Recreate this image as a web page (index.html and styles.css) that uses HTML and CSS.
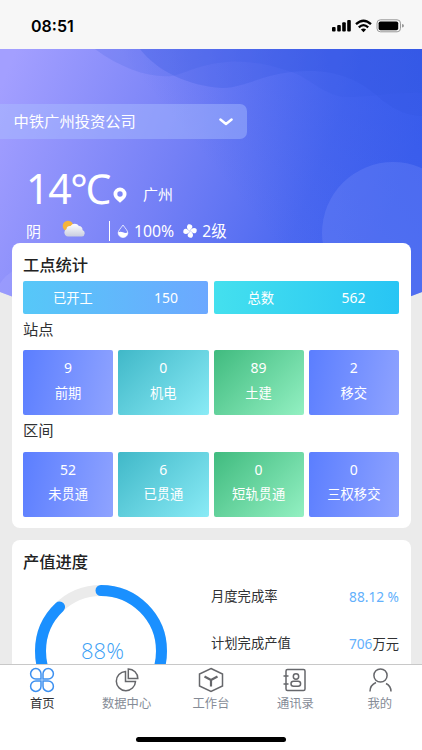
FILE: index.html
```html
<!DOCTYPE html>
<html lang="zh-CN">
<head>
  <meta charset="UTF-8">
  <meta name="viewport" content="width=device-width, initial-scale=1.0">
  <title>首页</title>
  <link rel="stylesheet" href="styles.css">
</head>
<body>

<!-- 状态栏 -->
<header class="status-bar">
  <span class="time">08:51</span>
  <svg class="status-icons" width="74" height="14" viewBox="0 0 74 14">
    <rect x="1" y="8" width="3.600" height="4.500" rx="1"/>
    <rect x="6.200" y="6" width="3.600" height="6.500" rx="1"/>
    <rect x="11.200" y="3.300" width="3.600" height="9.200" rx="1"/>
    <rect x="16.200" y="1" width="3.600" height="11.500" rx="1"/>
    <g fill="none" stroke="#000" stroke-width="2.3">
      <path d="M25 5.2Q32.5-1.8 40 5.2"/>
      <path d="M27.8 8.3Q32.5 4 37.2 8.3"/>
    </g>
    <path d="M29.9 10.5Q32.5 8.3 35.1 10.5L32.5 13.2z"/>
    <rect x="46" y=".8" width="23.5" height="12" rx="3.4" fill="none" stroke="#999"/>
    <rect x="47.6" y="2.5" width="19.6" height="8.7" rx="1.8"/>
    <path d="M71 5q2 .3 2 1.8T71 8.6z" fill="#999"/>
  </svg>
</header>

<main class="content">
  <!-- 顶部背景 -->
  <svg class="hero-bg" width="422" height="290" viewBox="0 0 422 290">
    <defs>
      <linearGradient id="sky" gradientUnits="userSpaceOnUse" x1="0" y1="40" x2="380" y2="190">
        <stop offset="0" stop-color="#a39fff"/>
        <stop offset=".46" stop-color="#7480f6"/>
        <stop offset=".8" stop-color="#4c69f0"/>
        <stop offset="1" stop-color="#4263ef"/>
      </linearGradient>
      <linearGradient id="shade" gradientUnits="userSpaceOnUse" x1="240" y1="150" x2="422" y2="0">
        <stop offset="0" stop-color="#2f55e8" stop-opacity="0"/>
        <stop offset="1" stop-color="#2f55e8" stop-opacity=".6"/>
      </linearGradient>
      <clipPath id="arc"><path d="M0 0H422V243Q211 327 0 243z"/></clipPath>
    </defs>
    <g clip-path="url(#arc)">
      <rect width="422" height="290" fill="url(#sky)"/>
      <rect width="422" height="290" fill="url(#shade)"/>
      <path d="M95 0C122 20 150 29 172 27C190 23 200 14 235 12.500C260 13 278 18 297 25C317 35 328 49 352 48C375 47 395 43 422 44V0z" fill="#3456df" fill-opacity=".16"/>
      <path d="M140 0C157 22 188 37 223 39C250 38 264 22 310 22C340 22 362 32 382 51C398 63 408 66 422 67V0z" fill="#3456df" fill-opacity=".26"/>
      <circle cx="393" cy="184" r="71" fill="#8ba0ff" fill-opacity=".22"/>
      <circle cx="36" cy="258" r="43" fill="#aaa9ff" fill-opacity=".35"/>
    </g>
  </svg>

  <section class="hero">
    <div class="company">
      <span>中铁广州投资公司</span>
      <svg width="14" height="8" viewBox="0 0 14 8"><path d="M1.400 1.500L7 6L12.600 1.500" fill="none" stroke="#fff" stroke-width="2.400" stroke-linecap="round" stroke-linejoin="round"/></svg>
    </div>

    <div class="temp-row">
      <span class="temp">14℃</span>
      <svg class="pin" width="14" height="16" viewBox="0 0 14 16"><path fill="#fff" fill-rule="evenodd" d="M7 .5A6.500 6.500 0 0 0 .5 7C.5 10.500 4 13.300 7 15.700C10 13.300 13.500 10.500 13.500 7A6.500 6.500 0 0 0 7 .5zM7 4.300A2.700 2.700 0 1 1 7 9.700A2.700 2.700 0 0 1 7 4.300z"/></svg>
      <span class="city">广州</span>
    </div>

    <div class="weather-row">
      <span class="sky">阴</span>
      <svg class="cloud" width="24" height="18" viewBox="0 0 24 18">
        <defs>
          <linearGradient id="cloudFill" x1="0" y1="0" x2="0" y2="1">
            <stop offset="0" stop-color="#fff"/>
            <stop offset="1" stop-color="#c9cde0"/>
          </linearGradient>
        </defs>
        <circle cx="6" cy="6" r="5.300" fill="#f5b43c"/>
        <path d="M6 16.500A4 4 0 0 1 4.500 9A3.300 3.300 0 0 1 8.500 6A5.200 5.200 0 0 1 17 6A3.600 3.600 0 0 1 20.500 10A3.400 3.400 0 0 1 20 16.500z" fill="url(#cloudFill)"/>
      </svg>
      <i class="divider"></i>
      <svg class="drop" width="12" height="14" viewBox="0 0 12 14">
        <path d="M6 1C4 4 1.200 6.500 1.200 9A4.800 4.500 0 0 0 10.800 9C10.800 6.500 8 4 6 1z" fill="none" stroke="#dfe3ff"/>
        <path d="M1.200 8.300Q3.500 7 6 8.300T10.800 8.300A4.800 4.700 0 0 1 1.200 9z" fill="#fff"/>
      </svg>
      <span class="humidity">100%</span>
      <svg class="fan" width="14" height="14" viewBox="0 0 14 14" fill="#fff">
        <path id="blade" d="M7 7C4 5.500 3 2.500 5 .5C7.500 -.2 9.800 1 9.300 3.300C8.900 4.800 7.500 5 7 7z"/>
        <use href="#blade" transform="rotate(90 7 7)"/>
        <use href="#blade" transform="rotate(180 7 7)"/>
        <use href="#blade" transform="rotate(270 7 7)"/>
      </svg>
      <span class="wind">2级</span>
    </div>
  </section>

  <!-- 工点统计 -->
  <section class="card stats">
    <h2>工点统计</h2>
    <div class="totals">
      <div class="total started"><span>已开工</span><b>150</b></div>
      <div class="total all"><span>总数</span><b>562</b></div>
    </div>
    <h3>站点</h3>
    <div class="tiles">
      <div class="tile blue"><b>9</b><span>前期</span></div>
      <div class="tile teal"><b>0</b><span>机电</span></div>
      <div class="tile green"><b>89</b><span>土建</span></div>
      <div class="tile blue"><b>2</b><span>移交</span></div>
    </div>
    <h3>区间</h3>
    <div class="tiles">
      <div class="tile blue"><b>52</b><span>未贯通</span></div>
      <div class="tile teal"><b>6</b><span>已贯通</span></div>
      <div class="tile green"><b>0</b><span>短轨贯通</span></div>
      <div class="tile blue"><b>0</b><span>三权移交</span></div>
    </div>
  </section>

  <!-- 产值进度 -->
  <section class="card output">
    <h2>产值进度</h2>
    <div class="output-body">
      <svg class="ring" width="134" height="134" viewBox="0 0 134 134">
        <circle cx="67" cy="67" r="60.500" fill="none" stroke="#ebebeb" stroke-width="11"/>
        <circle cx="67" cy="67" r="60.500" fill="none" stroke="#1a90ff" stroke-width="11" stroke-linecap="round" pathLength="100" stroke-dasharray="88 100" transform="rotate(-90 67 67)"/>
        <text x="68.500" y="75" text-anchor="middle">88%</text>
      </svg>
      <div class="figures">
        <div class="figure"><span>月度完成率</span><span><em>88.12 %</em></span></div>
        <div class="figure"><span>计划完成产值</span><span><em>706</em>万元</span></div>
      </div>
    </div>
  </section>
</main>

<!-- 底部导航 -->
<footer class="bottom">
  <nav class="tabs">
    <a class="tab active">
      <svg width="26" height="26" viewBox="0 0 26 26">
        <path d="M12 12V6.800A5.200 5.200 0 1 0 6.800 12z"/>
        <path d="M14 12V6.800A5.200 5.200 0 1 1 19.200 12z"/>
        <path d="M12 14V19.200A5.200 5.200 0 1 1 6.800 14z"/>
        <path d="M14 14V19.200A5.200 5.200 0 1 0 19.200 14z"/>
      </svg>
      <span>首页</span>
    </a>
    <a class="tab">
      <svg width="26" height="26" viewBox="0 0 26 26">
        <path d="M11.500 4.500A9.600 9.600 0 1 0 21.500 14.500H11.500z"/>
        <path d="M14.300 2V11.500H23.800A9.500 9.500 0 0 0 14.300 2z"/>
      </svg>
      <span>数据中心</span>
    </a>
    <a class="tab">
      <svg width="26" height="26" viewBox="0 0 26 26">
        <path d="M13 1.500L24.500 7V19L13 24.500L1.500 19V7z"/>
        <path d="M6.500 9.500L13 13L19.500 9.500M13 13V19.500" stroke-width="2.200"/>
      </svg>
      <span>工作台</span>
    </a>
    <a class="tab">
      <svg width="26" height="26" viewBox="0 0 26 26">
        <rect x="4" y="2.500" width="19" height="21" rx="1.500"/>
        <path d="M1.500 9H6.500M1.500 17H6.500"/>
        <circle cx="14" cy="9.500" r="2.700"/>
        <rect x="9" y="14.300" width="9.600" height="5" rx="2.500"/>
      </svg>
      <span>通讯录</span>
    </a>
    <a class="tab">
      <svg width="26" height="26" viewBox="0 0 26 26">
        <circle cx="13.500" cy="8.500" r="6.600"/>
        <path d="M3 24.500C3 20 5.500 17 9 15.500M19 16.500C22 18 24 21 24 24.500"/>
      </svg>
      <span>我的</span>
    </a>
  </nav>
  <div class="home-line"></div>
</footer>

</body>
</html>
```
FILE: styles.css
```css
* {
  box-sizing: border-box;
}

body {
  margin: 0;
  height: 750px;
  display: flex;
  flex-direction: column;
  overflow: hidden;
  background-color: #ebebeb;
  color: #303133;
  font-family: "Noto Sans", "Noto Sans CJK SC", sans-serif;
}

svg {
  display: block;
  flex: none;
}

.status-bar {
  height: 49px;
  flex: none;
  display: flex;
  justify-content: space-between;
  padding: 19px 17px 0 31px;
  background-color: #f7f7f7;
}

.time {
  font: 600 16px/14px Inter, sans-serif;
  color: #000;
}

.content {
  position: relative;
  flex: 1;
  min-height: 0;
  overflow: hidden;
}

.hero-bg {
  position: absolute;
  top: 0;
  left: 0;
}

.hero {
  position: relative;
  height: 194px;
  padding-top: 55px;
  color: #fff;
}

.company {
  display: flex;
  align-items: center;
  justify-content: space-between;
  width: 246.5px;
  height: 35px;
  padding: 0 14px 0 13.5px;
  border-radius: 0 7px 7px 0;
  background-color: rgba(170, 190, 255, 0.45);
  font-size: 15.3px;
}

.company span {
  margin-top: -3px;
}

.temp-row {
  display: flex;
  height: 60px;
  margin-top: 19px;
  padding-left: 26px;
  line-height: 60px;
}

.temp {
  width: 87px;
  font-size: 41px;
  letter-spacing: -1.3px;
  white-space: nowrap;
}

.pin {
  margin-top: 29px;
}

.city {
  margin: 6px 0 0 16px;
  font-size: 15px;
}

.weather-row {
  display: flex;
  align-items: center;
  height: 22px;
  margin-top: 2px;
  padding-left: 26px;
  font-size: 15px;
  line-height: 22px;
}

.cloud {
  margin: -4px 0 0 21px;
}

.divider {
  width: 1px;
  height: 20px;
  margin: 0 7px 0 23px;
  background-color: #fff;
}

.humidity {
  margin: 0 9px 0 5px;
  font-size: 15.8px;
}

.fan {
  margin-right: 5px;
}

.wind {
  font-size: 15.5px;
}

.card {
  position: relative;
  margin: 0 11.5px 11.5px;
  padding: 0 11.5px;
  border-radius: 8px;
  background-color: #fff;
}

.stats {
  height: 285px;
}

h2 {
  margin: 0;
  padding-top: 7px;
  height: 38px;
  font-size: 16.3px;
  line-height: 30px;
  font-weight: 500;
  color: #222;
}

h3 {
  margin: 0;
  height: 36.5px;
  font-size: 15.3px;
  line-height: 31px;
  font-weight: 400;
}

.totals {
  display: grid;
  grid-template-columns: 1fr 1fr;
  gap: 6px;
}

.total {
  display: flex;
  align-items: center;
  justify-content: space-between;
  height: 32.5px;
  padding: 0 30px;
  border-radius: 2px;
  color: #fff;
  font-size: 13.3px;
}

.total.all {
  padding: 0 33.5px;
}

.total b,
.tile b {
  font-size: 14px;
  font-weight: 400;
}

.started {
  background: linear-gradient(90deg, #56c8f8, #6ca8ff);
}

.all {
  background: linear-gradient(90deg, #44e0ee, #28c5f4);
}

.tiles {
  display: grid;
  grid-template-columns: repeat(4, 1fr);
  gap: 5px;
}

.tile {
  display: flex;
  flex-direction: column;
  align-items: center;
  height: 65px;
  padding-top: 5px;
  border-radius: 2px;
  color: #fff;
  font-size: 13.3px;
  line-height: 25.5px;
}

.blue {
  background: linear-gradient(100deg, #5b7eff, #8fa3ff);
}

.teal {
  background: linear-gradient(135deg, #40b8c8, #8aebf6);
}

.green {
  background: linear-gradient(135deg, #40bb7f, #93f0c2);
}

.output {
  height: 240px;
}

.output-body {
  display: flex;
  padding-left: 11px;
}

.ring {
  margin-top: 6px;
}

.ring text {
  font-family: "Open Sans", "Noto Sans", sans-serif;
  font-weight: 300;
  font-size: 22px;
  fill: #3d9ff5;
}

.figures {
  flex: 1;
  margin-left: 43px;
}

.figure {
  display: flex;
  justify-content: space-between;
  height: 47px;
  font-size: 13.3px;
  line-height: 37px;
}

.figure em {
  font-style: normal;
  font-size: 13.7px;
  color: #62b0fc;
}

.bottom {
  height: 86px;
  flex: none;
  border-top: 1px solid #c8c8c8;
  background-color: #fff;
}

.tabs {
  display: grid;
  grid-template-columns: repeat(5, 1fr);
}

.tab {
  display: flex;
  flex-direction: column;
  align-items: center;
  padding-top: 2px;
  color: #858b96;
  font-size: 12.3px;
  line-height: 22px;
}

.tab svg {
  fill: none;
  stroke: #66676b;
  stroke-width: 1.5;
}

.tab.active {
  color: #303133;
}

.tab.active svg {
  stroke: #3d90f0;
}

.home-line {
  width: 150px;
  height: 5px;
  margin: 22px auto 0;
  border-radius: 3px;
  background-color: #000;
}
```
